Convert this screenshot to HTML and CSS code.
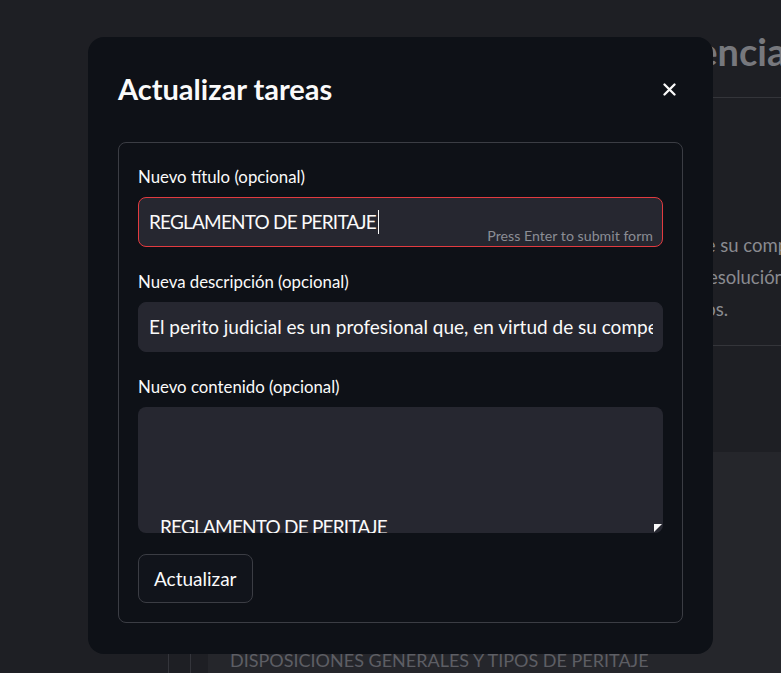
FILE: index.html
```html
<!DOCTYPE html>
<html lang="es">
<head>
<meta charset="utf-8">
<title>Actualizar tareas</title>
<link rel="stylesheet" href="styles.css">
</head>
<body>
<div class="page">
  <div class="gutter">
    <div class="gutter-spacer"></div>
    <div class="gutter-lines"><span class="vline"></span><span class="vline"></span></div>
  </div>
  <div class="main">
    <header class="page-head">
      <h1 class="page-title">Panel de Tareas y sus Referencias</h1>
    </header>
    <div class="page-body">
      <p class="para-line">El perito judicial es aquel profesional que, por virtud de su competencia técnica y experiencia,</p>
      <p class="para-line">asesora al juez aportando elementos técnicos para la resolución de</p>
      <p class="para-line">controversias surgidas en los distintos juicios y procesos.</p>
    </div>
    <div class="page-gap"></div>
    <section class="panel">
      <div class="panel-spacer"></div>
      <div class="panel-text">DISPOSICIONES GENERALES Y TIPOS DE PERITAJE</div>
    </section>
  </div>
</div>

<div class="modal" role="dialog" aria-label="Actualizar tareas">
  <div class="modal-head">
    <h2 class="modal-title">Actualizar tareas</h2>
    <button class="close-btn" aria-label="Cerrar">
      <svg width="13" height="13" viewBox="0 0 13 13"><path d="M1.5 1.5 L11.5 11.5 M11.5 1.5 L1.5 11.5" stroke="#fafafa" stroke-width="2.3" stroke-linecap="round"/></svg>
    </button>
  </div>
  <form class="form">
    <div class="field">
      <div class="label">Nuevo título (opcional)</div>
      <div class="input focused">
        <span class="input-text caps">REGLAMENTO DE PERITAJE<span class="caret"></span></span>
        <span class="hint">Press Enter to submit form</span>
      </div>
    </div>
    <div class="field">
      <div class="label">Nueva descripción (opcional)</div>
      <div class="input">
        <span class="input-text clip">El perito judicial es un profesional que, en virtud de su competencia técnica y experiencia</span>
      </div>
    </div>
    <div class="field last">
      <div class="label">Nuevo contenido (opcional)</div>
      <div class="textarea">
        <div class="ta-line">REGLAMENTO DE PERITAJE</div>
        <span class="resize"></span>
      </div>
    </div>
    <button type="button" class="submit">Actualizar</button>
  </form>
</div>
</body>
</html>
```

FILE: styles.css
```css
* { box-sizing: border-box; }
html, body { margin: 0; padding: 0; }
body {
  width: 781px;
  height: 673px;
  overflow: hidden;
  background: #1e1f24;
  font-family: Lato, "Open Sans", sans-serif;
  color: #fafafa;
}
.page {
  display: flex;
  height: 673px;
}
.gutter {
  width: 208px;
  flex: none;
  display: flex;
  flex-direction: column;
}
.gutter-spacer { flex: 1; }
.gutter-lines {
  height: 20px;
  display: flex;
  gap: 21px;
  padding-left: 168px;
}
.vline {
  width: 1px;
  height: 100%;
  background: #34353b;
}
.main {
  flex: 1;
  min-width: 0;
  display: flex;
  flex-direction: column;
  overflow: hidden;
}
.page-head {
  height: 98px;
  border-bottom: 1px solid #34353a;
  padding-left: 38px;
}
.page-title {
  margin: 0;
  padding-top: 28px;
  font-size: 38px;
  line-height: 46px;
  font-weight: 700;
  color: #77787d;
  white-space: nowrap;
}
.page-body {
  padding-top: 131px;
  padding-left: 64px;
  height: 248px;
  border-bottom: 1px solid #34353a;
}
.para-line {
  margin: 0;
  font-size: 18.5px;
  line-height: 32px;
  color: #8a8b90;
  white-space: nowrap;
}
.page-gap { height: 106px; }
.panel {
  flex: 1;
  background: #25262b;
  display: flex;
  flex-direction: column;
  padding-left: 22px;
}
.panel-spacer { flex: 1; }
.panel-text {
  height: 24px;
  font-size: 18px;
  line-height: 22px;
  color: #5d5e64;
  white-space: nowrap;
}

/* modal */
.modal {
  position: absolute;
  left: 88px;
  top: 37px;
  width: 625px;
  height: 617px;
  background: #0e1117;
  border-radius: 16px;
  padding: 30px 30px 31px;
}
.modal-head {
  height: 44px;
  margin-bottom: 31px;
  display: flex;
  align-items: center;
  justify-content: space-between;
}
.modal-title {
  margin: 0;
  font-size: 29px;
  line-height: 44px;
  font-weight: 700;
  color: #fafafa;
}
.close-btn {
  width: 28px;
  height: 28px;
  padding: 0;
  border: 0;
  background: transparent;
  display: flex;
  align-items: center;
  justify-content: center;
}
.form {
  margin: 0;
  border: 1px solid #3b3d44;
  border-radius: 8px;
  padding: 24px 19px 19px;
}
.field { margin-bottom: 25px; }
.field.last { margin-bottom: 21px; }
.label {
  font-size: 16.8px;
  line-height: 20px;
  margin-bottom: 10px;
  color: #fafafa;
}
.input {
  height: 50px;
  background: #262730;
  border: 1px solid #262730;
  border-radius: 8px;
  padding: 0 9px 0 10px;
  display: flex;
  align-items: center;
}
.input.focused { border-color: #e23b40; }
.input-text {
  flex: 1;
  min-width: 0;
  font-size: 19px;
  line-height: 24px;
  white-space: nowrap;
  display: flex;
  align-items: center;
}
.input-text.caps { letter-spacing: -0.8px; }
.input-text.clip { overflow: hidden; display: block; }
.caret {
  display: inline-block;
  width: 1px;
  height: 24px;
  background: #fafafa;
  margin-left: 2px;
}
.hint {
  align-self: flex-end;
  padding-bottom: 1px;
  font-size: 14.2px;
  line-height: 18px;
  color: #8b8d95;
  white-space: nowrap;
}
.textarea {
  position: relative;
  height: 126px;
  background: #262730;
  border-radius: 8px;
  overflow: hidden;
  padding: 110px 0 0 22px;
}
.ta-line {
  font-size: 19px;
  line-height: 20px;
  letter-spacing: -0.8px;
  color: #fafafa;
  white-space: nowrap;
}
.resize {
  position: absolute;
  right: 1px;
  bottom: 1px;
  width: 0;
  height: 0;
  border-top: 8px solid #fafafa;
  border-right: 8px solid transparent;
}
.submit {
  height: 49px;
  padding: 0 15px;
  background: #11141b;
  border: 1px solid #3b3d44;
  border-radius: 8px;
  color: #fafafa;
  font-family: inherit;
  font-size: 19px;
}
```
